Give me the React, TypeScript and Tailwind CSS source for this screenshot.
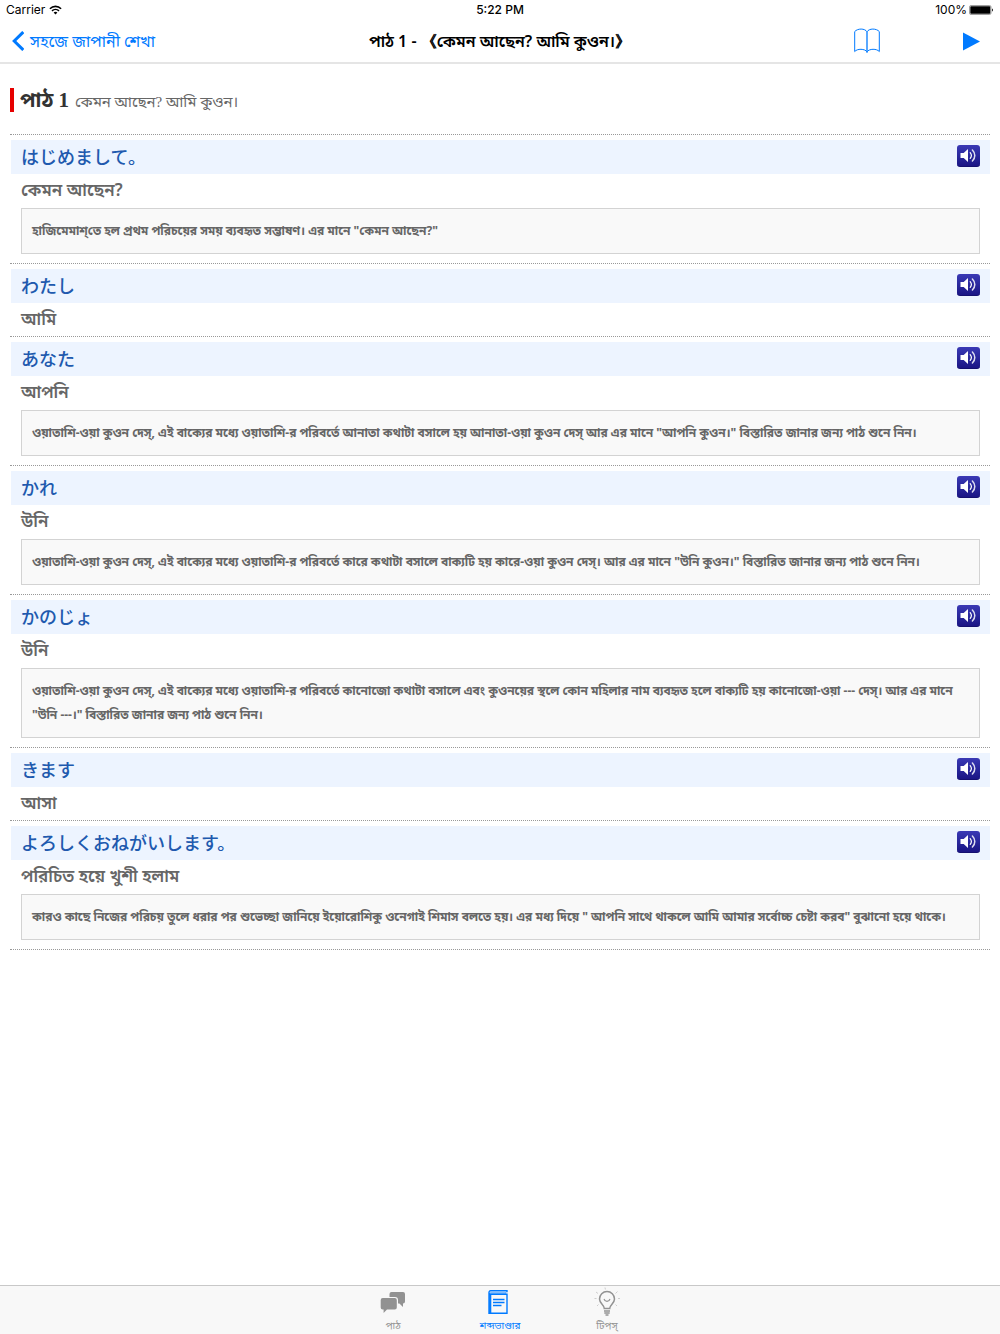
import { useState } from "react";
import { clsx } from "clsx";

type Word = {
  ja: string;
  bn: string;
  note?: string;
};

const words: Word[] = [
  {
    ja: "はじめまして。",
    bn: "কেমন আছেন?",
    note: 'হাজিমেমাশ্‌তে হল প্রথম পরিচয়ের সময় ব্যবহৃত সম্ভাষণ। এর মানে "কেমন আছেন?"',
  },
  { ja: "わたし", bn: "আমি" },
  {
    ja: "あなた",
    bn: "আপনি",
    note: 'ওয়াতাশি-ওয়া কুওন দেস্‌, এই বাক্যের মধ্যে ওয়াতাশি-র পরিবর্তে আনাতা কথাটা বসালে হয় আনাতা-ওয়া কুওন দেস্‌ আর এর মানে "আপনি কুওন।" বিস্তারিত জানার জন্য পাঠ শুনে নিন।',
  },
  {
    ja: "かれ",
    bn: "উনি",
    note: 'ওয়াতাশি-ওয়া কুওন দেস্‌, এই বাক্যের মধ্যে ওয়াতাশি-র পরিবর্তে কারে কথাটা বসালে বাক্যটি হয় কারে-ওয়া কুওন দেস্‌। আর এর মানে "উনি কুওন।" বিস্তারিত জানার জন্য পাঠ শুনে নিন।',
  },
  {
    ja: "かのじょ",
    bn: "উনি",
    note: 'ওয়াতাশি-ওয়া কুওন দেস্‌, এই বাক্যের মধ্যে ওয়াতাশি-র পরিবর্তে কানোজো কথাটা বসালে এবং কুওনয়ের স্থলে কোন মহিলার নাম ব্যবহৃত হলে বাক্যটি হয় কানোজো-ওয়া --- দেস্‌। আর এর মানে "উনি\u00a0---।" বিস্তারিত জানার জন্য পাঠ শুনে নিন।',
  },
  { ja: "きます", bn: "আসা" },
  {
    ja: "よろしくおねがいします。",
    bn: "পরিচিত হয়ে খুশী হলাম",
    note: 'কারও কাছে নিজের পরিচয় তুলে ধরার পর শুভেচ্ছা জানিয়ে ইয়োরোশিকু ওনেগাই শিমাস বলতে হয়। এর মধ্য দিয়ে " আপনি সাথে থাকলে আমি আমার সর্বোচ্চ চেষ্টা করব" বুঝানো হয়ে থাকে।',
  },
];

function WifiIcon() {
  return (
    <svg width="13" height="10" viewBox="0 0 13 10" fill="none" stroke="black" strokeWidth="1.6">
      <path d="M0.9 3.7a8 8 0 0 1 11.2 0" />
      <path d="M3 5.9a5 5 0 0 1 7 0" />
      <path d="M6.5 9.6 4.6 7.6a2.8 2.8 0 0 1 3.8 0z" fill="black" stroke="none" />
    </svg>
  );
}

function BatteryIcon() {
  return (
    <svg width="25" height="10" viewBox="0 0 25 10">
      <rect x="0.5" y="0.5" width="21.5" height="9" rx="1.5" fill="white" stroke="#777" strokeWidth="0.7" />
      <rect x="1.3" y="1.3" width="20" height="7.4" rx="0.8" fill="black" />
      <path d="M23 3.4c1.2.4 1.2 2.8 0 3.2z" fill="black" />
    </svg>
  );
}

function BookIcon() {
  return (
    <svg width="26" height="26" viewBox="0 0 26 26" fill="none" stroke="currentColor" strokeWidth="1">
      <path d="M13 3.8C11 .2 3.5.2.7 3.6v20C3 20.4 11 20.6 13 23.8c2-3.2 10-3.4 12.3-.2v-20C22.5.2 15 .2 13 3.8z" />
      <path d="M13 3.8v21" strokeWidth="1.3" />
    </svg>
  );
}

function SpeakerIcon() {
  return (
    <svg width="17" height="15" viewBox="0 0 17 15" fill="none" stroke="white" strokeLinecap="round">
      <path d="M0.5 5h3.2L8 1v13L3.7 10H0.5z" fill="white" stroke="none" />
      <path d="M10.2 4.6c1.4 1.7 1.4 4.1 0 5.8" strokeWidth="1.2" />
      <path d="M12.4 2c3.2 3.2 3.2 7.8 0 11" strokeWidth="1.5" opacity="0.85" />
    </svg>
  );
}

function ChatIcon() {
  return (
    <svg width="26" height="22" viewBox="0 0 26 22" fill="currentColor">
      <path d="M11.5 1H23a2 2 0 0 1 2 2v7.5a2 2 0 0 1-2 2V16l-3.6-3.5H18V9a3 3 0 0 0-3-3H9.5V3a2 2 0 0 1 2-2z" />
      <path d="M2.7 7h12.1a2 2 0 0 1 2 2v7.5a2 2 0 0 1-2 2H7L3.6 22v-3.5h-.9a2 2 0 0 1-2-2V9a2 2 0 0 1 2-2z" />
    </svg>
  );
}

function NotebookIcon() {
  return (
    <svg width="24" height="24" viewBox="0 0 24 24" fill="none" stroke="currentColor">
      <path d="M1 2.8v20.4h18V4.3H2.5C.5 4.3.5.8 2.5.8H19v1.500" strokeWidth="1.4" />
      <path d="M2.5 2.5H18v1H2.5z" strokeWidth="0.8" opacity="0.6" />
      <path d="M2.2 4v19" strokeWidth="2.2" />
      <path d="M5 9.5h11.5M5 12.5h11.5M5 15.5h8.5" strokeWidth="1.4" />
    </svg>
  );
}

function BulbIcon() {
  return (
    <svg width="26" height="30" viewBox="0 0 26 30" fill="none" stroke="currentColor">
      <path d="M10.3 21.5c0-3.8-4.8-5-4.8-9.5a7.5 7.5 0 0 1 15 0c0 4.5-4.8 5.7-4.8 9.5z" strokeWidth="1.5" />
      <path d="M10 12c1 3.2 5 3.2 6 0" strokeWidth="1.1" />
      <path d="M10 24h6M10.3 26h5.4M11.5 28h3" strokeWidth="1.7" />
      <path d="M11 .5l.4 2M2 5l2 1.5M23.5 4.5l-2 2M24 11.5h2M.5 11.5h2M3 19l1.5-1.5M23 19l-1.5-1.5" strokeWidth="0.7" opacity="0.6" />
    </svg>
  );
}

const tabs = [
  { id: "lesson", label: "পাঠ", icon: ChatIcon },
  { id: "vocabulary", label: "শব্দভাণ্ডার", icon: NotebookIcon },
  { id: "tips", label: "টিপস্‌", icon: BulbIcon },
];

function WordRow({ word }: { word: Word }) {
  return (
    <li className="border-t border-dotted border-[#999] pt-[5px]">
      <div className="ml-px flex h-[34px] items-center justify-between bg-[#edf4ff] px-2.5 pb-0.5">
        <h2 lang="ja" className="font-['Noto_Sans_CJK_JP',sans-serif] text-[18px] leading-6 font-medium text-[#2059ae]">
          {word.ja}
        </h2>
        <button
          type="button"
          aria-label={word.ja}
          className="flex h-[22px] w-[23px] items-center justify-center rounded-[3px] border-b border-[#151070] bg-linear-to-b from-[#3a39b5] to-[#1b1585]"
        >
          <SpeakerIcon />
        </button>
      </div>
      <p className="flex h-[33px] items-center px-[11px] pb-0.5 text-[17px] leading-6 font-semibold text-[#666]">{word.bn}</p>
      {word.note && (
        <p className="mt-px mr-2.5 mb-[9px] ml-[11px] border border-[#d3d3d3] bg-[#f9f9f9] p-2.5 text-[12px] leading-6 font-bold text-[#666]">
          {word.note}
        </p>
      )}
    </li>
  );
}

export default function App() {
  const [activeTab, setActiveTab] = useState("vocabulary");

  return (
    <div lang="bn" className="flex min-h-screen flex-col bg-white font-['Noto_Sans','Noto_Sans_Bengali',sans-serif]">
      <header className="border-b-2 border-[#e5e5e5]">
        {/* Status bar */}
        <div className="grid h-5 grid-cols-3 items-center px-1.5 font-['Inter',sans-serif] text-[12px] leading-4 text-black">
          <div className="flex items-center gap-1">
            Carrier <WifiIcon />
          </div>
          <div className="text-center font-medium">5:22 PM</div>
          <div className="flex items-center justify-end gap-0.5">
            100% <BatteryIcon />
          </div>
        </div>

        {/* Navigation bar */}
        <div className="grid h-[42px] grid-cols-[1fr_auto_1fr] items-center px-3">
          <a href="#lessons" className="flex items-center gap-1.5 text-[16px] leading-6 text-[#007aff]">
            <svg width="12" height="20" viewBox="0 0 12 20" fill="none" stroke="currentColor" strokeWidth="3">
              <path d="M11.3 1 2.2 10l9.1 9" />
            </svg>
            সহজে জাপানী শেখা
          </a>
          <h1 className="text-[16px] leading-6 font-semibold text-black">পাঠ 1 - 《কেমন আছেন? আমি কুওন।》</h1>
          <div className="flex items-center justify-end gap-[83px] pr-2 text-[#007aff]">
            <button type="button" aria-label="বই">
              <BookIcon />
            </button>
            <button type="button" aria-label="চালান">
              <svg width="17" height="19" viewBox="0 0 17 19" fill="currentColor">
                <path d="M0 .5 17 9.500 0 18.500z" />
              </svg>
            </button>
          </div>
        </div>
      </header>

      <main className="flex-1 px-2.5 pt-6">
        <div className="mb-[22px] flex h-6 items-baseline gap-1.5 border-l-4 border-[#e60000] pl-1.5 font-['Liberation_Serif','Noto_Sans_Bengali',serif]">
          <span className="text-[21px] leading-6 font-bold text-[#333]">পাঠ 1</span>
          <span className="text-[15px] leading-6 text-[#666]">কেমন আছেন? আমি কুওন।</span>
        </div>
        <ul className="border-b border-dotted border-[#999]">
          {words.map((word) => (
            <WordRow key={word.ja} word={word} />
          ))}
        </ul>
      </main>

      {/* Tab bar */}
      <nav className="flex h-[49px] justify-center border-t border-[#c8c8c8] bg-[#f8f8f8]">
        {tabs.map(({ id, label, icon: Icon }) => (
          <button
            key={id}
            type="button"
            aria-pressed={activeTab === id}
            onClick={() => setActiveTab(id)}
            className={clsx(
              "flex w-[107px] flex-col items-center pb-0.5 text-[10px] leading-[14px]",
              activeTab === id ? "text-[#007aff]" : "text-[#929292]"
            )}
          >
            <span className="flex h-8 items-center">
              <Icon />
            </span>
            {label}
          </button>
        ))}
      </nav>
    </div>
  );
}
